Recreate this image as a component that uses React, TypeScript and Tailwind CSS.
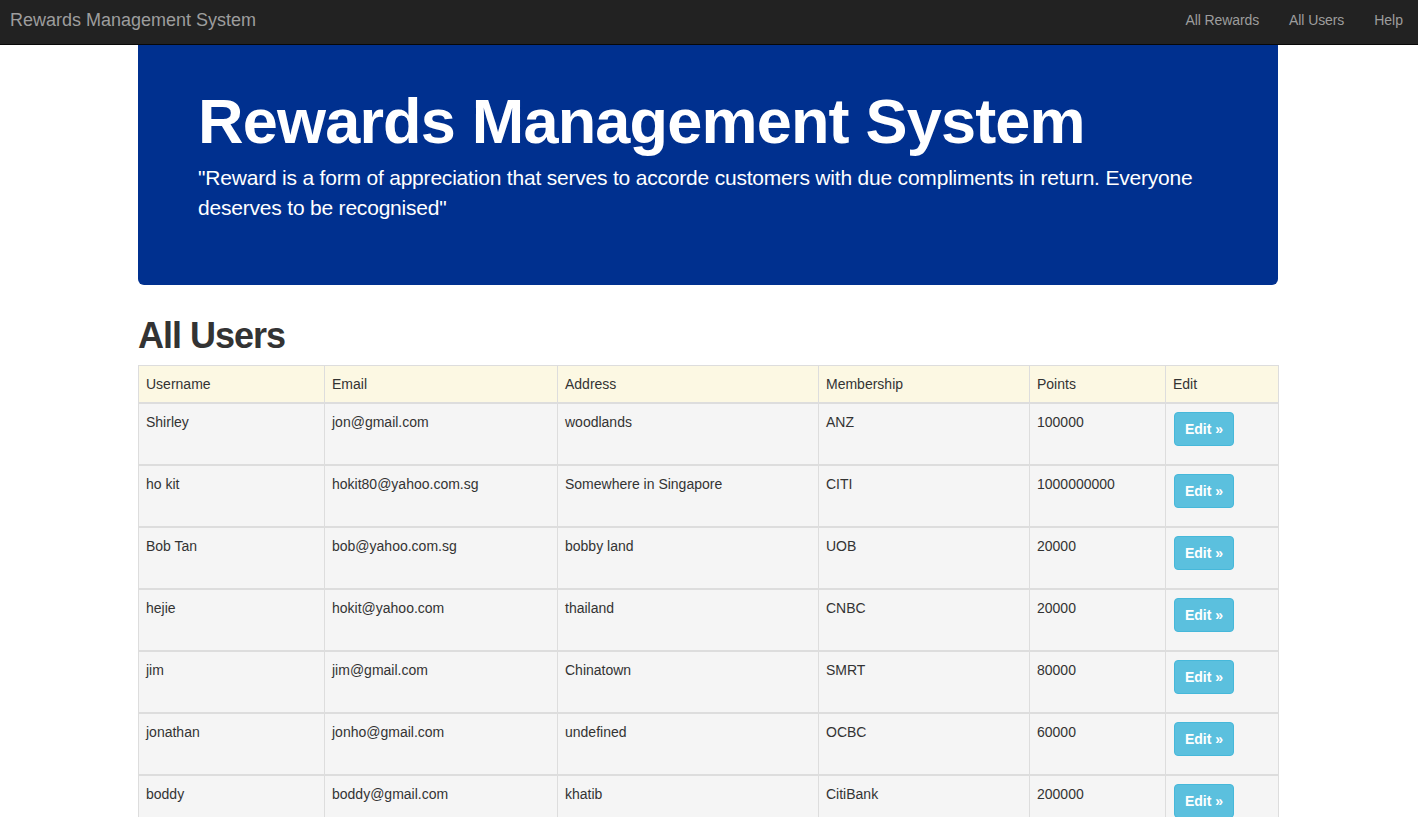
import React from "react";

const users = [
  { u: "Shirley", e: "jon@gmail.com", a: "woodlands", m: "ANZ", p: "100000" },
  { u: "ho kit", e: "hokit80@yahoo.com.sg", a: "Somewhere in Singapore", m: "CITI", p: "1000000000" },
  { u: "Bob Tan", e: "bob@yahoo.com.sg", a: "bobby land", m: "UOB", p: "20000" },
  { u: "hejie", e: "hokit@yahoo.com", a: "thailand", m: "CNBC", p: "20000" },
  { u: "jim", e: "jim@gmail.com", a: "Chinatown", m: "SMRT", p: "80000" },
  { u: "jonathan", e: "jonho@gmail.com", a: "undefined", m: "OCBC", p: "60000" },
  { u: "boddy", e: "boddy@gmail.com", a: "khatib", m: "CitiBank", p: "200000" },
];

const cols = ["Username", "Email", "Address", "Membership", "Points", "Edit"];

export default function App() {
  return (
    <div className="min-h-screen bg-white text-[#333] text-[14px] leading-[20px]" style={{ fontFamily: '"Liberation Sans", Arial, sans-serif' }}>
      <nav className="h-[45px] bg-[#222] border-b border-[#080808] flex items-center justify-between pb-[5px]">
        <div className="pl-[10px] text-[18px] text-[#9d9d9d] leading-[20px]">Rewards Management System</div>
        <ul className="flex items-center">
          <li className="px-[15px] text-[#9d9d9d] tracking-[-0.1px]">All Rewards</li>
          <li className="px-[15px] text-[#9d9d9d] tracking-[-0.1px]">All Users</li>
          <li className="px-[15px] text-[#9d9d9d]">Help</li>
        </ul>
      </nav>
      <div className="w-[1140px] ml-[138px]">
        <div className="bg-[#00308f] rounded-b-[6px] pt-[42px] pb-[62px] px-[60px] text-white">
          <h1 className="text-[63px] leading-[69px] font-bold m-0 tracking-[-0.8px]">Rewards Management System</h1>
          <p className="mt-[7px] text-[21px] leading-[30px] tracking-[-0.2px]">"Reward is a form of appreciation that serves to accorde customers with due compliments in return. Everyone deserves to be recognised"</p>
        </div>
        <h1 className="mt-[31px] mb-[9px] text-[36px] leading-[40px] font-bold tracking-[-1px] text-[#333]">All Users</h1>
        <table className="w-[1140px] table-fixed border-collapse border border-[#ddd]">
          <colgroup>
            <col className="w-[186px]" />
            <col className="w-[233px]" />
            <col className="w-[261px]" />
            <col className="w-[211px]" />
            <col className="w-[136px]" />
            <col className="w-[113px]" />
          </colgroup>
          <thead>
            <tr className="bg-[#fcf8e3]">
              {cols.map((c) => (
                <th key={c} className="text-left font-normal p-[8px] pl-[7px] border border-[#ddd] border-b-2">{c}</th>
              ))}
            </tr>
          </thead>
          {users.map((r) => (
            <tbody key={r.u} className="border-t-2 border-[#ddd]">
              <tr className="bg-[#f5f5f5] align-top">
                <td className="p-[8px] pl-[7px] border border-[#ddd]">{r.u}</td>
                <td className="p-[8px] pl-[7px] border border-[#ddd]">{r.e}</td>
                <td className="p-[8px] pl-[7px] border border-[#ddd]">{r.a}</td>
                <td className="p-[8px] pl-[7px] border border-[#ddd]">{r.m}</td>
                <td className="p-[8px] pl-[7px] border border-[#ddd]">{r.p}</td>
                <td className="p-[8px] border border-[#ddd]">
                  <div className="mb-[10px]">
                    <span className="inline-flex items-center justify-center h-[34px] w-[60px] rounded-[4px] bg-[#5bc0de] border border-[#46b8da] text-white font-bold text-[14px]">Edit »</span>
                  </div>
                </td>
              </tr>
            </tbody>
          ))}
        </table>
      </div>
    </div>
  );
}
